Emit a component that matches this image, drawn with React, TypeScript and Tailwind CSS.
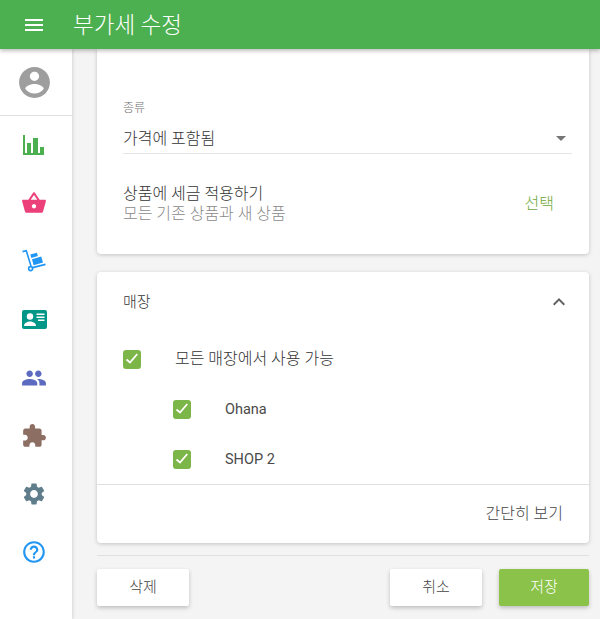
import React from 'react';

const font = { fontFamily: 'Roboto, "Noto Sans CJK KR", sans-serif' };

function Icon({ d, className }: { d: string; className: string }) {
  return (
    <svg viewBox="0 0 24 24" className={className} fill="currentColor">
      <path d={d} />
    </svg>
  );
}

function Dolly() {
  return (
    <svg viewBox="0 0 24 24" className="w-6 h-6 text-[#2196f3]" fill="none" stroke="currentColor" strokeWidth="1.6">
      <path d="M0.5 2.6L4.3 1.8L9 17" />
      <circle cx="8.6" cy="19.6" r="2" />
      <path d="M10.6 18.6L23.5 15.4" />
      <path fill="currentColor" stroke="none" d="M8.3 5.6l6.6-1.9 1 3.4-6.6 1.9zM10 10.2l9.2-2.6 1.8 6-9.4 2.6z" />
    </svg>
  );
}

function Badge() {
  return (
    <svg viewBox="0 0 25 19" className="w-[25px] h-[19px]">
      <rect x="0" y="0" width="25" height="19" rx="2" fill="#009688" />
      <circle cx="8" cy="6.5" r="3.2" fill="#fff" />
      <path d="M2 16c0-3 3-4.5 6-4.5s6 1.5 6 4.5z" fill="#fff" />
      <path d="M14.5 3.5h8V5h-8zM14.5 6.5h8V8h-8zM16 9.5h6.5V11H16z" fill="#fff" />
    </svg>
  );
}

function Check() {
  return (
    <div className="w-[18px] h-[19px] rounded-[3px] bg-[#7cb548] flex items-center justify-center shrink-0">
      <svg viewBox="0 0 18 18" className="w-[18px] h-[18px]" fill="none" stroke="#fff" strokeWidth="1.8">
        <path d="M3.5 9.5l3.5 3 7.3-8.5" />
      </svg>
    </div>
  );
}

const navIcons = [
  <Icon key="a" className="w-6 h-6 text-[#4caf50]" d="M1 2h2v18h2v-10h4v10h2V5h5v15h2v-6h4v8H1z" />,
  <Icon key="b" className="w-[26px] h-[26px] text-[#ec407a]" d="M17.21 9l-4.38-6.56c-.19-.28-.51-.42-.83-.42-.32 0-.64.14-.83.43L6.79 9H2c-.55 0-1 .45-1 1 0 .09.01.18.04.27l2.54 9.27c.23.84 1 1.46 1.92 1.46h13c.92 0 1.69-.62 1.93-1.46l2.54-9.27L23 10c0-.55-.45-1-1-1h-4.79zM9 9l3-4.4L15 9H9zm3 8c-1.1 0-2-.9-2-2s.9-2 2-2 2 .9 2 2-.9 2-2 2z" />,
  <Dolly key="c" />,
  <Badge key="d" />,
  <Icon key="e" className="w-[26px] h-[26px] text-[#5c6bc0]" d="M16 11c1.66 0 2.99-1.34 2.99-3S17.66 5 16 5c-1.66 0-3 1.34-3 3s1.34 3 3 3zm-8 0c1.66 0 2.99-1.34 2.99-3S9.66 5 8 5C6.34 5 5 6.34 5 8s1.34 3 3 3zm0 2c-2.33 0-7 1.17-7 3.5V19h14v-2.5c0-2.33-4.67-3.5-7-3.5zm8 0c-.29 0-.62.02-.97.05 1.16.84 1.97 1.97 1.97 3.45V19h6v-2.5c0-2.33-4.67-3.5-7-3.5z" />,
  <Icon key="f" className="w-[26px] h-[26px] text-[#8d6e63]" d="M20.5 11H19V7c0-1.1-.9-2-2-2h-4V3.5C13 2.12 11.88 1 10.5 1S8 2.12 8 3.5V5H4c-1.1 0-1.99.9-1.99 2v3.8H3.5c1.49 0 2.7 1.21 2.7 2.7s-1.21 2.7-2.7 2.7H2V20c0 1.1.9 2 2 2h3.8v-1.5c0-1.49 1.21-2.7 2.7-2.7 1.49 0 2.7 1.21 2.7 2.7V22H17c1.1 0 2-.9 2-2v-4h1.5c1.38 0 2.5-1.12 2.5-2.5S21.88 11 20.5 11z" />,
  <Icon key="g" className="w-[26px] h-[26px] text-[#607d8b]" d="M19.14 12.94c.04-.3.06-.61.06-.94 0-.32-.02-.64-.07-.94l2.03-1.58c.18-.14.23-.41.12-.61l-1.92-3.32c-.12-.22-.37-.29-.59-.22l-2.39.96c-.5-.38-1.03-.7-1.62-.94l-.36-2.54c-.04-.24-.24-.41-.48-.41h-3.84c-.24 0-.43.17-.47.41l-.36 2.54c-.59.24-1.13.57-1.62.94l-2.39-.96c-.22-.08-.47 0-.59.22L2.74 8.87c-.12.21-.08.47.12.61l2.03 1.58c-.05.3-.09.63-.09.94s.02.64.07.94l-2.03 1.58c-.18.14-.23.41-.12.61l1.92 3.32c.12.22.37.29.59.22l2.39-.96c.5.38 1.03.7 1.62.94l.36 2.54c.05.24.24.41.48.41h3.84c.24 0 .44-.17.47-.41l.36-2.54c.59-.24 1.13-.56 1.62-.94l2.39.96c.22.08.47 0 .59-.22l1.92-3.32c.12-.22.07-.47-.12-.61l-2.01-1.58zM12 15.6c-1.98 0-3.6-1.62-3.6-3.6s1.62-3.6 3.6-3.6 3.6 1.62 3.6 3.6-1.62 3.6-3.6 3.6z" />,
  <Icon key="h" className="w-[26px] h-[26px] text-[#2196f3]" d="M11 18h2v-2h-2v2zm1-16C6.48 2 2 6.48 2 12s4.48 10 10 10 10-4.48 10-10S17.52 2 12 2zm0 18c-4.41 0-8-3.59-8-8s3.59-8 8-8 8 3.59 8 8-3.59 8-8 8zm0-14c-2.21 0-4 1.79-4 4h2c0-1.1.9-2 2-2s2 .9 2 2c0 2-3 1.75-3 5h2c0-2.25 3-2.5 3-5 0-2.21-1.79-4-4-4z" />,
];

export default function App() {
  return (
    <div className="w-[600px] h-[619px] overflow-hidden flex flex-col bg-[#f4f4f4] font-light" style={font}>
      <header className="h-[49px] shrink-0 bg-[#4caf50] flex items-center text-white shadow-[0_2px_4px_rgba(0,0,0,0.25)] z-20">
        <svg viewBox="0 0 24 24" className="w-6 h-6 ml-[22px]" fill="currentColor">
          <path d="M3 18h18v-2H3v2zm0-5h18v-2H3v2zm0-7v2h18V6H3z" />
        </svg>
        <h1 className="ml-[27px] text-[22.5px] leading-[28px] font-light">부가세 수정</h1>
      </header>

      <div className="flex flex-1 min-h-0">
        <aside className="w-[72px] shrink-0 bg-white shadow-[1px_0_3px_rgba(0,0,0,0.12)] z-10">
          <div className="h-[67px] pr-[4px] flex items-center justify-center border-b border-[#e0e0e0]">
            <Icon className="w-[37px] h-[37px] text-[#9e9e9e]" d="M12 2C6.48 2 2 6.48 2 12s4.48 10 10 10 10-4.48 10-10S17.52 2 12 2zm0 3c1.66 0 3 1.34 3 3s-1.34 3-3 3-3-1.34-3-3 1.34-3 3-3zm0 14.2c-2.5 0-4.71-1.28-6-3.22.03-1.99 4-3.08 6-3.08 1.99 0 5.97 1.09 6 3.08-1.29 1.94-3.5 3.22-6 3.22z" />
          </div>
          <nav className="flex flex-col">
            {navIcons.map((icon, i) => (
              <div key={i} className="h-[58.2px] pr-[4px] flex items-center justify-center">{icon}</div>
            ))}
          </nav>
        </aside>

        <main className="flex-1 pl-[25px] pr-[11px] flex flex-col">
          <section className="h-[205px] shrink-0 bg-white rounded-b-[4px] shadow-[0_1px_4px_rgba(0,0,0,0.2)] px-[26px] pt-[51px]">
            <div className="text-[12px] leading-[16px] text-[#707070]">종류</div>
            <div className="mt-[7px] h-[31px] border-b border-[#e5e5e5] flex items-center justify-between mr-[-9px] pt-[1px]">
              <span className="text-[16px] text-[#333333]">가격에 포함됨</span>
              <span className="w-0 h-0 mr-[6px] border-x-[5px] border-x-transparent border-t-[5px] border-t-[#757575]" />
            </div>
            <div className="mt-[29px] flex items-center justify-between">
              <div>
                <div className="text-[16px] leading-[20px] pt-[1px] text-[#333333]">상품에 세금 적용하기</div>
                <div className="text-[16px] leading-[20px] text-[#8a8a8a]">모든 기존 상품과 새 상품</div>
              </div>
              <span className="text-[16px] text-[#6fa83c] mr-[9px]">선택</span>
            </div>
          </section>

          <section className="mt-[18px] h-[271px] shrink-0 bg-white rounded-[4px] shadow-[0_1px_4px_rgba(0,0,0,0.2)] flex flex-col">
            <div className="h-[60px] pl-[26px] pr-[18px] flex items-center justify-between">
              <span className="text-[15px] text-[#333333]">매장</span>
              <svg viewBox="0 0 24 24" className="w-6 h-6 text-[#616161]" fill="currentColor">
                <path d="M7.41 15.41L12 10.83l4.59 4.58L18 14l-6-6-6 6z" />
              </svg>
            </div>
            <div className="flex-1 flex flex-col pt-[2px]">
              <div className="h-[50px] pl-[26px] flex items-center gap-[34px]">
                <Check />
                <span className="text-[16px] text-[#333333]">모든 매장에서 사용 가능</span>
              </div>
              <div className="h-[50px] pl-[76px] flex items-center gap-[34px]">
                <Check />
                <span className="text-[14.5px] pt-[2px] font-normal text-[#4a4a4a]">Ohana</span>
              </div>
              <div className="h-[50px] pl-[76px] flex items-center gap-[34px]">
                <Check />
                <span className="text-[14.5px] pt-[2px] font-normal text-[#4a4a4a]">SHOP 2</span>
              </div>
            </div>
            <div className="h-[59px] border-t border-[#e0e0e0] flex items-center justify-end pr-[26px]">
              <span className="text-[16px] text-[#444444]">간단히 보기</span>
            </div>
          </section>

          <div className="mt-[12px] border-t border-[#e0e0e0] pt-[13px] flex items-center">
            <button className="w-[92px] h-[37px] bg-white rounded-[2px] text-[15px] text-[#444444] shadow-[0_2px_4px_rgba(0,0,0,0.22)]">삭제</button>
            <button className="ml-auto w-[92px] h-[37px] bg-white rounded-[2px] text-[15px] text-[#444444] shadow-[0_2px_4px_rgba(0,0,0,0.22)]">취소</button>
            <button className="ml-[17px] w-[90px] h-[37px] bg-[#8bc34a] rounded-[2px] text-[15px] text-white shadow-[0_2px_4px_rgba(0,0,0,0.22)]">저장</button>
          </div>
        </main>
      </div>
    </div>
  );
}
